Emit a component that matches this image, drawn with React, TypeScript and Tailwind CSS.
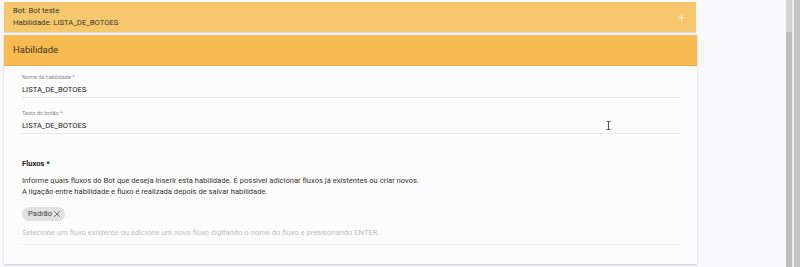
import { X, Plus } from 'lucide-react';

const font = { fontFamily: "Roboto, 'Liberation Sans', sans-serif" };

function Field({ label, value }: { label: string; value: string }) {
  return (
    <div className="border-b border-[#e6e6e6]">
      <div className="h-[11px] text-[5.5px] leading-[11px] text-[#8a8a8a]">{label}</div>
      <div className="h-[14px] text-[7.6px] leading-[14px] text-[#222]">{value}</div>
    </div>
  );
}

export default function App() {
  return (
    <div className="relative h-[267px] w-[800px] overflow-hidden bg-[#f8f7fa]" style={font}>
      <div className="flex flex-col gap-[3px] pl-[4px] pt-[2px] w-[697px]">
        {/* Summary bar */}
        <div className="flex h-[30px] w-[692px] items-center justify-between bg-[#f7c76d] pl-[9px] pr-[10px] shadow-[0_1px_1px_rgba(0,0,0,0.12)]">
          <div className="text-[7.7px] leading-[12px] text-[#3a3325]">
            <div>Bot: Bot teste</div>
            <div>Habilidade: LISTA_DE_BOTOES</div>
          </div>
          <Plus className="h-[9px] w-[9px] text-white" strokeWidth={2} />
        </div>

        {/* Skill card */}
        <div className="flex h-[229px] flex-col bg-[#fdfcfd] shadow-[0_1px_2px_rgba(0,0,0,0.2)]">
          <div className="flex h-[31px] items-center border-b border-[#e4a844] bg-[#f7bb52] pl-[9px] text-[9.5px] text-[#3b3222]">
            Habilidade
          </div>
          <div className="flex flex-col pl-[18px] pr-[17px] pt-[6px]">
            <Field label="Nome da habilidade *" value="LISTA_DE_BOTOES" />
            <div className="mt-[10px]">
              <Field label="Texto do botão *" value="LISTA_DE_BOTOES" />
            </div>

            <div className="mt-[25px] h-[10px] text-[7.6px] font-bold leading-[10px] text-[#222]">Fluxos *</div>
            <div className="mt-[6px] text-[7.6px] leading-[11px] text-[#333]">
              <div>Informe quais fluxos do Bot que deseja inserir esta habilidade. É possivel adicionar fluxos já existentes ou criar novos.</div>
              <div>A ligação entre habilidade e fluxo é realizada depois de salvar habilidade.</div>
            </div>

            <div className="mt-[10px] flex">
              <div className="flex h-[14px] items-center rounded-full bg-[#e0e0e0] pl-[6px] pr-[3px] text-[7.6px] text-[#444]">
                Padrão
                <X className="h-[10px] w-[10px] text-[#555]" strokeWidth={2} />
              </div>
            </div>

            <div className="mt-[7px] border-b border-[#ececec] pb-[6px] text-[7.6px] leading-[10px] text-[#bdbdbd]">
              Selecione um fluxo existente ou adicione um novo fluxo digitando o nome do fluxo e pressionando ENTER.
            </div>
          </div>
        </div>
      </div>

      {/* mouse text cursor */}
      <svg className="absolute left-[606px] top-[121px]" width="5" height="9" viewBox="0 0 5 9">
        <path d="M0.5 0.5h4M2.5 0.5v8M0.5 8.5h4" stroke="#555" strokeWidth="1" fill="none" />
      </svg>

      {/* scrollbars */}
      <div className="absolute right-0 top-0 flex h-full">
        <div className="flex h-full w-[6px] flex-col bg-[#d3d3d3]">
          <div className="h-[32px]" />
          <div className="flex-1 bg-[#bcbcbc]" />
        </div>
        <div className="w-[2px] bg-[#ececec]" />
        <div className="w-[6px] bg-[#c4c4c4]" />
      </div>
    </div>
  );
}
